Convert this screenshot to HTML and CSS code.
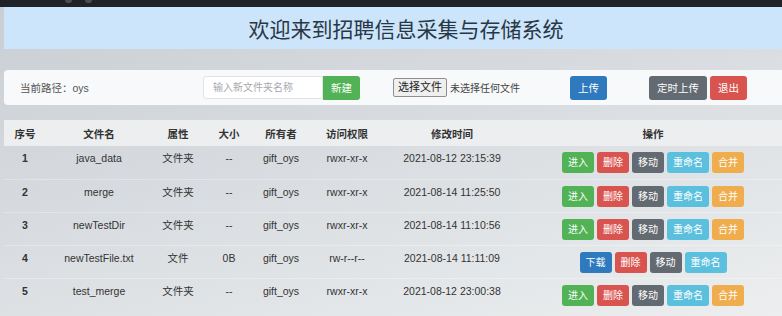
FILE: index.html
```html
<!DOCTYPE html>
<html>

<head>
    <meta charset="utf-8">
    <title>招聘信息采集与存储系统</title>
    <link rel="stylesheet" href="styles.css">
</head>

<body>
    <div class="top-bar"><span class="dot"></span><span class="dot"></span></div>
    <div class="page">
        <div class="title-bar">
            <h1>欢迎来到招聘信息采集与存储系统</h1>
        </div>

        <div class="tool-card">
            <div class="path">当前路径：oys</div>
            <div class="new-dir">
                <input type="text" placeholder="输入新文件夹名称">
                <button class="btn btn-success">新建</button>
            </div>
            <div class="file-pick">
                <span class="file-btn">选择文件</span>
                <span class="file-name">未选择任何文件</span>
            </div>
            <div><button class="btn btn-primary">上传</button></div>
            <div class="right-btns">
                <button class="btn btn-secondary">定时上传</button>
                <button class="btn btn-danger">退出</button>
            </div>
        </div>

        <table class="file-table">
            <colgroup>
                <col style="width: 42px">
                <col style="width: 106px">
                <col style="width: 52px">
                <col style="width: 50px">
                <col style="width: 54px">
                <col style="width: 78px">
                <col style="width: 132px">
                <col style="width: 270px">
            </colgroup>
            <thead>
                <tr>
                    <th>序号</th>
                    <th>文件名</th>
                    <th>属性</th>
                    <th>大小</th>
                    <th>所有者</th>
                    <th>访问权限</th>
                    <th>修改时间</th>
                    <th>操作</th>
                </tr>
            </thead>
            <tbody>
                <tr>
                    <td class="num">1</td>
                    <td>java_data</td>
                    <td>文件夹</td>
                    <td>--</td>
                    <td>gift_oys</td>
                    <td>rwxr-xr-x</td>
                    <td>2021-08-12 23:15:39</td>
                    <td class="ops">
                        <div class="op-btns">
                            <button class="btn btn-success">进入</button>
                            <button class="btn btn-danger">删除</button>
                            <button class="btn btn-secondary">移动</button>
                            <button class="btn btn-info">重命名</button>
                            <button class="btn btn-warning">合并</button>
                        </div>
                    </td>
                </tr>
                <tr>
                    <td class="num">2</td>
                    <td>merge</td>
                    <td>文件夹</td>
                    <td>--</td>
                    <td>gift_oys</td>
                    <td>rwxr-xr-x</td>
                    <td>2021-08-14 11:25:50</td>
                    <td class="ops">
                        <div class="op-btns">
                            <button class="btn btn-success">进入</button>
                            <button class="btn btn-danger">删除</button>
                            <button class="btn btn-secondary">移动</button>
                            <button class="btn btn-info">重命名</button>
                            <button class="btn btn-warning">合并</button>
                        </div>
                    </td>
                </tr>
                <tr>
                    <td class="num">3</td>
                    <td>newTestDir</td>
                    <td>文件夹</td>
                    <td>--</td>
                    <td>gift_oys</td>
                    <td>rwxr-xr-x</td>
                    <td>2021-08-14 11:10:56</td>
                    <td class="ops">
                        <div class="op-btns">
                            <button class="btn btn-success">进入</button>
                            <button class="btn btn-danger">删除</button>
                            <button class="btn btn-secondary">移动</button>
                            <button class="btn btn-info">重命名</button>
                            <button class="btn btn-warning">合并</button>
                        </div>
                    </td>
                </tr>
                <tr>
                    <td class="num">4</td>
                    <td>newTestFile.txt</td>
                    <td>文件</td>
                    <td>0B</td>
                    <td>gift_oys</td>
                    <td>rw-r--r--</td>
                    <td>2021-08-14 11:11:09</td>
                    <td class="ops">
                        <div class="op-btns">
                            <button class="btn btn-primary">下载</button>
                            <button class="btn btn-danger">删除</button>
                            <button class="btn btn-secondary">移动</button>
                            <button class="btn btn-info">重命名</button>
                        </div>
                    </td>
                </tr>
                <tr>
                    <td class="num">5</td>
                    <td>test_merge</td>
                    <td>文件夹</td>
                    <td>--</td>
                    <td>gift_oys</td>
                    <td>rwxr-xr-x</td>
                    <td>2021-08-12 23:00:38</td>
                    <td class="ops">
                        <div class="op-btns">
                            <button class="btn btn-success">进入</button>
                            <button class="btn btn-danger">删除</button>
                            <button class="btn btn-secondary">移动</button>
                            <button class="btn btn-info">重命名</button>
                            <button class="btn btn-warning">合并</button>
                        </div>
                    </td>
                </tr>
            </tbody>
        </table>
    </div>
</body>

</html>
```

FILE: styles.css
```css
html,
body {
    overflow: hidden;
}

body {
    margin: 0;
    width: 782px;
    height: 316px;
    font-family: 'Liberation Sans', 'Noto Sans CJK SC', sans-serif;
    font-size: 10.5px;
    color: #333;
    background: linear-gradient(165deg, #c9ced4 0%, #d8dce0 45%, #eceeef 100%);
}

/* dark strip of the window above the page */
.top-bar {
    height: 7px;
    background-color: #202225;
    display: flex;
    gap: 13px;
    padding-left: 65px;
}

.top-bar .dot {
    width: 7px;
    height: 3px;
    background-color: #4a4d52;
    border-radius: 0 0 3px 3px;
}

.page {
    width: 804px;
    padding-left: 4px;
}

.title-bar {
    height: 42px;
    background-color: #cce5fa;
    display: flex;
    align-items: center;
    justify-content: center;
}

.title-bar h1 {
    margin: 0;
    font-size: 21px;
    font-weight: normal;
    color: #283746;
}

.tool-card {
    margin-top: 21px;
    height: 35px;
    background-color: #f8f9fb;
    border-radius: 4px;
    padding-left: 16px;
    display: grid;
    grid-template-columns: 183px 190px 177px 79px auto;
    align-items: center;
}

.path {
    color: #555;
}

.new-dir {
    display: flex;
    align-items: center;
}

.new-dir input {
    box-sizing: border-box;
    width: 120px;
    height: 23px;
    border: 1px solid #e1e3e6;
    border-radius: 3px 0 0 3px;
    padding: 0 9px;
    font-family: inherit;
    font-size: 10px;
    background-color: #fff;
}

.new-dir input::placeholder {
    color: #a6a9ae;
}

.new-dir .btn {
    border-radius: 0 3px 3px 0;
}

.file-pick {
    display: flex;
    align-items: center;
}

.file-btn {
    box-sizing: border-box;
    height: 19px;
    line-height: 17px;
    padding: 0 4px;
    border: 1px solid #8f8f8f;
    border-radius: 2px;
    background-color: #efefef;
    color: #222;
    font-size: 11px;
}

.file-name {
    margin-left: 3px;
    font-size: 10px;
    color: #444;
}

.right-btns {
    display: flex;
    gap: 3px;
}

.btn {
    border: none;
    border-radius: 3px;
    color: #fff;
    font-family: inherit;
    font-size: 10.5px;
    height: 24px;
    line-height: 24px;
    padding: 0 8px;
    cursor: pointer;
}

.btn-success {
    background-color: #52b356;
}

.btn-danger {
    background-color: #d9534f;
}

.btn-secondary {
    background-color: #636a71;
}

.btn-info {
    background-color: #5bc0de;
}

.btn-warning {
    background-color: #f0ad4e;
}

.btn-primary {
    background-color: #2f79be;
}

.file-table {
    margin-top: 15px;
    width: 784px;
    table-layout: fixed;
    border-collapse: collapse;
}

.file-table th {
    height: 26px;
    padding: 0;
    background-color: #eceef0;
    font-weight: bold;
    color: #333;
    text-align: center;
    vertical-align: middle;
}

.file-table td {
    height: 33px;
    box-sizing: border-box;
    padding: 4px 0 0;
    line-height: 17px;
    text-align: center;
    vertical-align: top;
    white-space: nowrap;
}

.file-table tbody tr + tr td {
    border-top: 1px solid rgba(255, 255, 255, 0.3);
}

.file-table td.num {
    font-weight: bold;
}

.file-table td.ops {
    padding-top: 6px;
}

.op-btns {
    display: flex;
    justify-content: center;
    gap: 3px;
}

.op-btns .btn {
    height: 21px;
    line-height: 21px;
    font-size: 10px;
    padding: 0 6px;
}
```
